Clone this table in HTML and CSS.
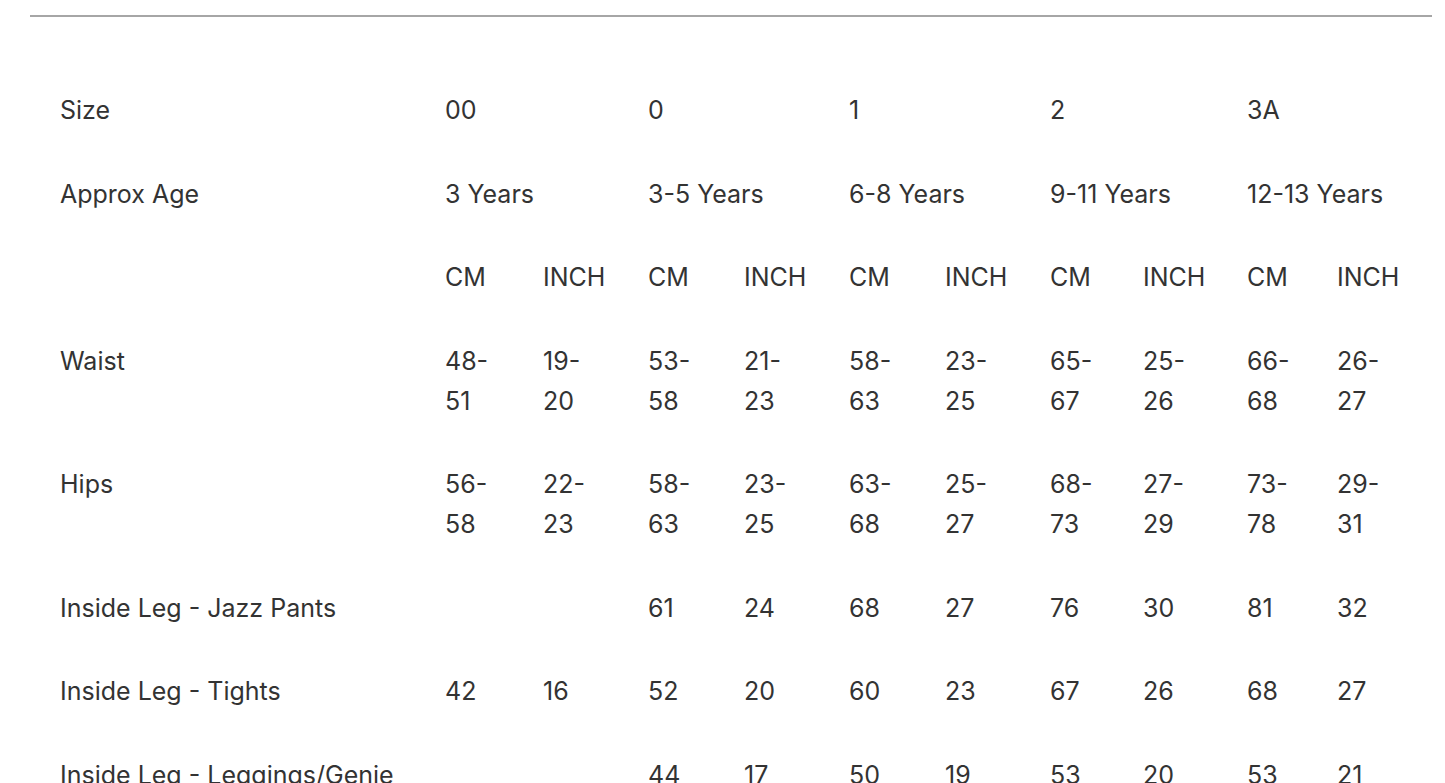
FILE: index.html
```html
<!DOCTYPE html>
<html lang="en">
<head>
<meta charset="utf-8">
<title>Size Chart</title>
<link rel="stylesheet" href="styles.css">
</head>
<body>
<div class="page">
  <div class="rule"></div>
  <table class="chart">
    <colgroup>
      <col class="c-label">
      <col class="c-cm1"><col class="c-in1">
      <col class="c-cm2"><col class="c-in2">
      <col class="c-cm3"><col class="c-in3">
      <col class="c-cm4"><col class="c-in4">
      <col class="c-cm5"><col class="c-in5">
    </colgroup>
    <tbody>
      <tr>
        <td>Size</td>
        <td colspan="2">00</td>
        <td colspan="2">0</td>
        <td colspan="2">1</td>
        <td colspan="2">2</td>
        <td colspan="2">3A</td>
      </tr>
      <tr>
        <td>Approx Age</td>
        <td colspan="2">3 Years</td>
        <td colspan="2">3-5 Years</td>
        <td colspan="2">6-8 Years</td>
        <td colspan="2">9-11 Years</td>
        <td colspan="2">12-13 Years</td>
      </tr>
      <tr>
        <td></td>
        <td>CM</td><td>INCH</td>
        <td>CM</td><td>INCH</td>
        <td>CM</td><td>INCH</td>
        <td>CM</td><td>INCH</td>
        <td>CM</td><td>INCH</td>
      </tr>
      <tr>
        <td>Waist</td>
        <td class="v">48-51</td><td class="v">19-20</td>
        <td class="v">53-58</td><td class="v">21-23</td>
        <td class="v">58-63</td><td class="v">23-25</td>
        <td class="v">65-67</td><td class="v">25-26</td>
        <td class="v">66-68</td><td class="v">26-27</td>
      </tr>
      <tr>
        <td>Hips</td>
        <td class="v">56-58</td><td class="v">22-23</td>
        <td class="v">58-63</td><td class="v">23-25</td>
        <td class="v">63-68</td><td class="v">25-27</td>
        <td class="v">68-73</td><td class="v">27-29</td>
        <td class="v">73-78</td><td class="v">29-31</td>
      </tr>
      <tr>
        <td>Inside Leg - Jazz Pants</td>
        <td class="v"></td><td class="v"></td>
        <td class="v">61</td><td class="v">24</td>
        <td class="v">68</td><td class="v">27</td>
        <td class="v">76</td><td class="v">30</td>
        <td class="v">81</td><td class="v">32</td>
      </tr>
      <tr>
        <td>Inside Leg - Tights</td>
        <td class="v">42</td><td class="v">16</td>
        <td class="v">52</td><td class="v">20</td>
        <td class="v">60</td><td class="v">23</td>
        <td class="v">67</td><td class="v">26</td>
        <td class="v">68</td><td class="v">27</td>
      </tr>
      <tr>
        <td>Inside Leg - Leggings/Genie</td>
        <td class="v"></td><td class="v"></td>
        <td class="v">44</td><td class="v">17</td>
        <td class="v">50</td><td class="v">19</td>
        <td class="v">53</td><td class="v">20</td>
        <td class="v">53</td><td class="v">21</td>
      </tr>
    </tbody>
  </table>
</div>
</body>
</html>
```

FILE: styles.css
```css
html, body {
  margin: 0;
  padding: 0;
  background: #ffffff;
}

body {
  font-family: Inter, "Open Sans", "Liberation Sans", sans-serif;
  color: #333333;
  font-size: 25px;
  line-height: 39.5px;
}

.page {
  padding: 15px 13px 0 30px;
}

.rule {
  border-top: 2px solid #a6a6a6;
}

.chart {
  margin: 52px 0 0 30px;
  width: 1372px;
  table-layout: fixed;
  border-collapse: collapse;
}

.chart td {
  padding: 22.1px 0;
  vertical-align: top;
  text-align: left;
  white-space: normal;
}

.chart td.v {
  padding-right: 44px;
}

.c-label { width: 385px; }
.c-cm1 { width: 98px; }
.c-in1 { width: 105px; }
.c-cm2 { width: 96px; }
.c-in2 { width: 105px; }
.c-cm3 { width: 96px; }
.c-in3 { width: 105px; }
.c-cm4 { width: 93px; }
.c-in4 { width: 104px; }
.c-cm5 { width: 90px; }
.c-in5 { width: 95px; }
```
